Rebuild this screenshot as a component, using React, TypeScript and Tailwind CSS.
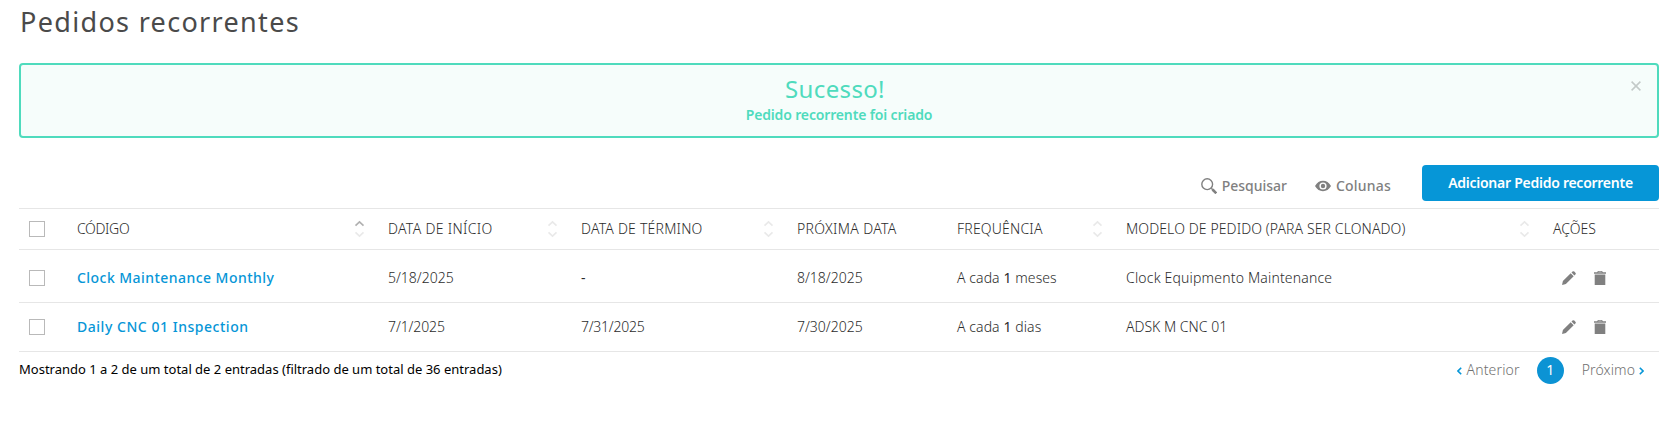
import React from "react";

const COLS = "grid grid-cols-[58px_311px_193px_216px_160px_169px_427px_106px]";

function SortIcon({ active = false }: { active?: boolean }) {
  return (
    <svg width="11" height="18" viewBox="0 0 11 18" fill="none" strokeWidth="1.6">
      <path d="M1.5 5.6 5.5 1.8l4 3.8" stroke={active ? "#b0b0b0" : "#e9e9e9"} />
      <path d="M1.5 12.4l4 3.8 4-3.8" stroke="#e9e9e9" />
    </svg>
  );
}

function Checkbox() {
  return <span className="block size-4 border border-[#b9b9b9] bg-white" />;
}

function HeaderCell({ label, cls, sort }: { label: string; cls: string; sort?: "on" | "off" }) {
  return (
    <div className="flex items-center justify-between pr-[23px]">
      <span className={cls}>{label}</span>
      {sort && <SortIcon active={sort === "on"} />}
    </div>
  );
}

function Actions() {
  return (
    <div className="flex items-center gap-[18px] pl-[9px]">
      <svg width="14" height="14" viewBox="0 0 14 14" fill="#808080">
        <path d="M0 14l.9-3.9L8.7 2.3l3 3-7.8 7.8zM9.5 1.6l1-1q.9-.9 1.8 0l1.1 1.1q.9.9 0 1.8l-1 1z" />
      </svg>
      <svg width="12" height="14" viewBox="0 0 12 14" fill="#808080">
        <path d="M0 1.3h3.2L3.9 0h4.2l.7 1.3H12v1.5H0zM4.2 1.3h3.6L7.4.8H4.6zM.7 3.6h10.6V14H.7z" fillRule="evenodd" />
      </svg>
    </div>
  );
}

export default function App() {
  return (
    <main className="flex h-[427px] flex-col bg-white pr-[18px] pl-[19px] font-['Noto_Sans',sans-serif] whitespace-nowrap text-[#2c2c2c]">
      <h1 className="h-[63px] pt-1 pl-px text-[27px] leading-9 tracking-[1.33px] text-[#4a4a4a]">Pedidos recorrentes</h1>
      <section className="relative flex h-[75px] flex-col items-center rounded border-2 border-[#4fdbbd] bg-[#f6fdfb] pt-2.5 text-[#4fdbbd]">
        <h2 className="mr-2 text-2xl leading-7 tracking-[0.35px]">Sucesso!</h2>
        <p className="mt-0.5 text-sm leading-5 font-semibold tracking-[-0.15px]">Pedido recorrente foi criado</p>
        <svg className="absolute top-4 right-4" width="10" height="10" viewBox="0 0 10 10" stroke="#c3cac8" strokeWidth="1.5">
          <path d="M.6.6l8.8 8.8M9.4.6L.6 9.4" />
        </svg>
      </section>
      <div className="mt-[27px] flex h-[43px] items-start justify-end text-[#808080]">
        <div className="mt-[11px] flex items-center gap-[5px]">
          <svg className="-mt-px" width="16" height="16" viewBox="0 0 16 16" fill="none" stroke="#808080">
            <circle cx="6.2" cy="6.2" r="5.4" strokeWidth="1.4" />
            <path d="M10.3 10.3l1.5 1.5" strokeWidth="1.5" />
            <path d="M11.5 11.5l3.8 3.8" strokeWidth="2.6" />
          </svg>
          <span className="text-sm leading-5 font-medium">Pesquisar</span>
        </div>
        <div className="mt-[11px] ml-7 flex items-center gap-[5px]">
          <svg width="16" height="12" viewBox="0 0 16 12" fill="#808080">
            <path fillRule="evenodd" d="M0 6Q3 .8 8 .8T16 6q-3 5.2-8 5.2T0 6zm4.4 0a3.6 3.6 0 1 0 7.2 0 3.6 3.6 0 1 0-7.2 0z" />
            <circle cx="8" cy="6" r="2.2" />
          </svg>
          <span className="text-sm leading-5 font-medium tracking-[0.2px]">Colunas</span>
        </div>
        <button className="ml-[31px] h-9 w-[237px] rounded bg-[#0696d7] text-sm font-semibold tracking-[-0.26px] text-white">Adicionar Pedido recorrente</button>
      </div>
      <div className={`${COLS} h-[42px] items-center border-y border-[#e6e6e6] text-sm font-light`}>
        <div className="pl-2.5"><Checkbox /></div>
        <HeaderCell label="CÓDIGO" cls="tracking-[-0.35px]" sort="on" />
        <HeaderCell label="DATA DE INÍCIO" cls="tracking-[0.33px]" sort="off" />
        <HeaderCell label="DATA DE TÉRMINO" cls="tracking-[0.22px]" sort="off" />
        <HeaderCell label="PRÓXIMA DATA" cls="tracking-[0.33px]" />
        <HeaderCell label="FREQUÊNCIA" cls="tracking-[0.2px]" sort="off" />
        <HeaderCell label="MODELO DE PEDIDO (PARA SER CLONADO)" cls="tracking-[0.11px]" sort="off" />
        <HeaderCell label="AÇÕES" cls="" />
      </div>
      <div className={`${COLS} h-[53px] items-center border-b border-[#e6e6e6] pt-1 text-sm font-light`}>
        <div className="pl-2.5"><Checkbox /></div>
        <a className="font-medium tracking-[0.45px] text-[#0696d7]">Clock Maintenance Monthly</a>
        <span>5/18/2025</span>
        <span className="font-normal">-</span>
        <span>8/18/2025</span>
        <span className="tracking-[0.08px]">A cada <b>1</b> meses</span>
        <span className="tracking-[0.18px]">Clock Equipmento Maintenance</span>
        <Actions />
      </div>
      <div className={`${COLS} h-[49px] items-center border-b border-[#e6e6e6] text-sm font-light`}>
        <div className="pl-2.5"><Checkbox /></div>
        <a className="font-medium tracking-[0.53px] text-[#0696d7]">Daily CNC 01 Inspection</a>
        <span className="tracking-[-0.1px]">7/1/2025</span>
        <span className="tracking-[-0.25px]">7/31/2025</span>
        <span>7/30/2025</span>
        <span className="tracking-[0.08px]">A cada <b>1</b> dias</span>
        <span>ADSK M CNC 01</span>
        <Actions />
      </div>
      <footer className="flex items-start justify-between pr-[15px]">
        <p className="pt-[7px] text-[13px] leading-5 text-black">Mostrando 1 a 2 de um total de 2 entradas (filtrado de um total de 36 entradas)</p>
        <nav className="flex h-[37px] items-center text-sm font-light text-[#707070]">
          <svg className="mr-1" width="5" height="8" viewBox="0 0 5 8" fill="none" stroke="#0696d7" strokeWidth="1.6"><path d="M4.2.8 1 4l3.2 3.2" /></svg>
          <span className="-mt-px tracking-[0.17px]">Anterior</span>
          <span className="mr-[18px] ml-[17px] flex size-[27px] items-center justify-center rounded-full bg-[#0c93d4] pb-px font-normal text-white">1</span>
          <span className="-mt-px tracking-[0.1px]">Próximo</span>
          <svg className="ml-1" width="5" height="8" viewBox="0 0 5 8" fill="none" stroke="#0696d7" strokeWidth="1.6"><path d="M.8.8 4 4 .8 7.2" /></svg>
        </nav>
      </footer>
    </main>
  );
}
